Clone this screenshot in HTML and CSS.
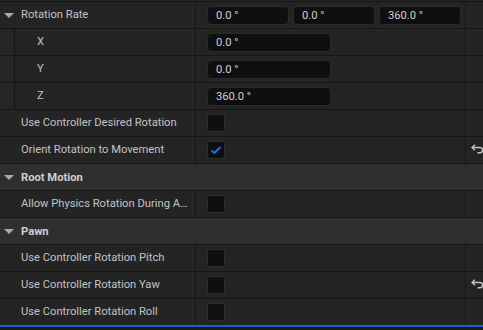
FILE: index.html
```html
<!DOCTYPE html>
<html lang="en">
<head>
    <meta charset="UTF-8">
    <title>Details</title>
    <link rel="stylesheet" href="styles.css">
</head>
<body>
    <div class="panel">
        <!-- Rotation Rate group -->
        <div class="row">
            <div class="name"><span class="arrow"></span>Rotation Rate</div>
            <div class="value triple">
                <div class="num">0.0 °</div>
                <div class="num">0.0 °</div>
                <div class="num">360.0 °</div>
            </div>
            <div class="reset"></div>
        </div>
        <div class="row child">
            <div class="name"><span class="gutter"></span><span class="label">X</span></div>
            <div class="value"><div class="num single">0.0 °</div></div>
            <div class="reset"></div>
        </div>
        <div class="row child">
            <div class="name"><span class="gutter"></span><span class="label">Y</span></div>
            <div class="value"><div class="num single">0.0 °</div></div>
            <div class="reset"></div>
        </div>
        <div class="row child">
            <div class="name"><span class="gutter"></span><span class="label">Z</span></div>
            <div class="value"><div class="num single">360.0 °</div></div>
            <div class="reset"></div>
        </div>
        <div class="row">
            <div class="name">Use Controller Desired Rotation</div>
            <div class="value"><span class="check"></span></div>
            <div class="reset"></div>
        </div>
        <div class="row">
            <div class="name">Orient Rotation to Movement</div>
            <div class="value">
                <span class="check">
                    <svg width="12" height="10" viewBox="0 0 12 10"><path d="M1.5 5.5 L4.5 8 L10.5 2" fill="none" stroke="#1d74dc" stroke-width="2"/></svg>
                </span>
            </div>
            <div class="reset">
                <svg class="undo" width="14" height="10" viewBox="0 0 14 10"><path d="M4 0.8 L1 3.5 L4 6.2 M1 3.5 H9 a2.6 2.6 0 0 1 0 5.2 H6.5" fill="none" stroke="#c4c4c4" stroke-width="1.4"/></svg>
            </div>
        </div>

        <!-- Root Motion -->
        <div class="row header"><span class="arrow"></span>Root Motion</div>
        <div class="row">
            <div class="name">Allow Physics Rotation During Anim Root Motion</div>
            <div class="value"><span class="check"></span></div>
            <div class="reset"></div>
        </div>

        <!-- Pawn -->
        <div class="row header"><span class="arrow"></span>Pawn</div>
        <div class="row">
            <div class="name">Use Controller Rotation Pitch</div>
            <div class="value"><span class="check"></span></div>
            <div class="reset"></div>
        </div>
        <div class="row">
            <div class="name">Use Controller Rotation Yaw</div>
            <div class="value"><span class="check"></span></div>
            <div class="reset">
                <svg class="undo" width="14" height="10" viewBox="0 0 14 10"><path d="M4 0.8 L1 3.5 L4 6.2 M1 3.5 H9 a2.6 2.6 0 0 1 0 5.2 H6.5" fill="none" stroke="#c4c4c4" stroke-width="1.4"/></svg>
            </div>
        </div>
        <div class="row">
            <div class="name">Use Controller Rotation Roll</div>
            <div class="value"><span class="check"></span></div>
            <div class="reset"></div>
        </div>
    </div>
    <div class="focus-line"></div>
</body>
</html>
```

FILE: styles.css
```css
* {
    box-sizing: border-box;
}
html, body {
    margin: 0;
    background-color: #1b1b1b;
    font-family: Roboto, "Noto Sans", sans-serif;
    font-size: 11.2px;
    color: #c2c2c2;
    overflow: hidden;
}
.panel {
    padding-top: 1px;
    background-color: #242424;
}
.row {
    display: flex;
    height: 27px;
    border-top: 1px solid #161616;
    background-color: #242424;
}
.name {
    position: relative;
    width: 196px;
    flex: none;
    padding: 0 3px 0 21px;
    border-right: 1px solid #161616;
    line-height: 26px;
    white-space: nowrap;
    overflow: hidden;
    text-overflow: ellipsis;
}
.arrow {
    position: absolute;
    left: 4px;
    top: 11px;
    width: 0;
    height: 0;
    border-left: 5px solid transparent;
    border-right: 5px solid transparent;
    border-top: 5px solid #a8a8a8;
}
.child .name {
    display: flex;
    padding: 0;
}
.gutter {
    width: 15px;
    flex: none;
    height: 26px;
    background-color: #252525;
    border-right: 1px solid #141414;
}
.label {
    padding-left: 22px;
}
.value {
    width: 270px;
    flex: none;
    display: flex;
    align-items: center;
    padding: 0 3px 0 11px;
    border-right: 1px solid #161616;
}
.triple {
    gap: 4px;
}
.num {
    width: 82px;
    height: 19px;
    line-height: 17px;
    padding-left: 8px;
    background-color: #0f0f0f;
    border: 1px solid #2a2a2a;
    border-radius: 4px;
    color: #cfcfcf;
    white-space: nowrap;
}
.num.single {
    width: 124px;
}
.check {
    width: 18px;
    height: 18px;
    background-color: #0f0f0f;
    border: 1px solid #2e2e2e;
    border-radius: 3px;
    display: flex;
    align-items: center;
    justify-content: center;
}
.reset {
    flex: 1;
    overflow: hidden;
    display: flex;
    align-items: center;
}
.undo {
    margin-left: 5px;
    margin-top: -3px;
    flex: none;
}
.header {
    position: relative;
    background-color: #2f2f2f;
    align-items: center;
    padding-left: 21px;
    font-weight: bold;
    color: #d0d0d0;
}
.focus-line {
    height: 2px;
    background-color: #1664c0;
}
```
